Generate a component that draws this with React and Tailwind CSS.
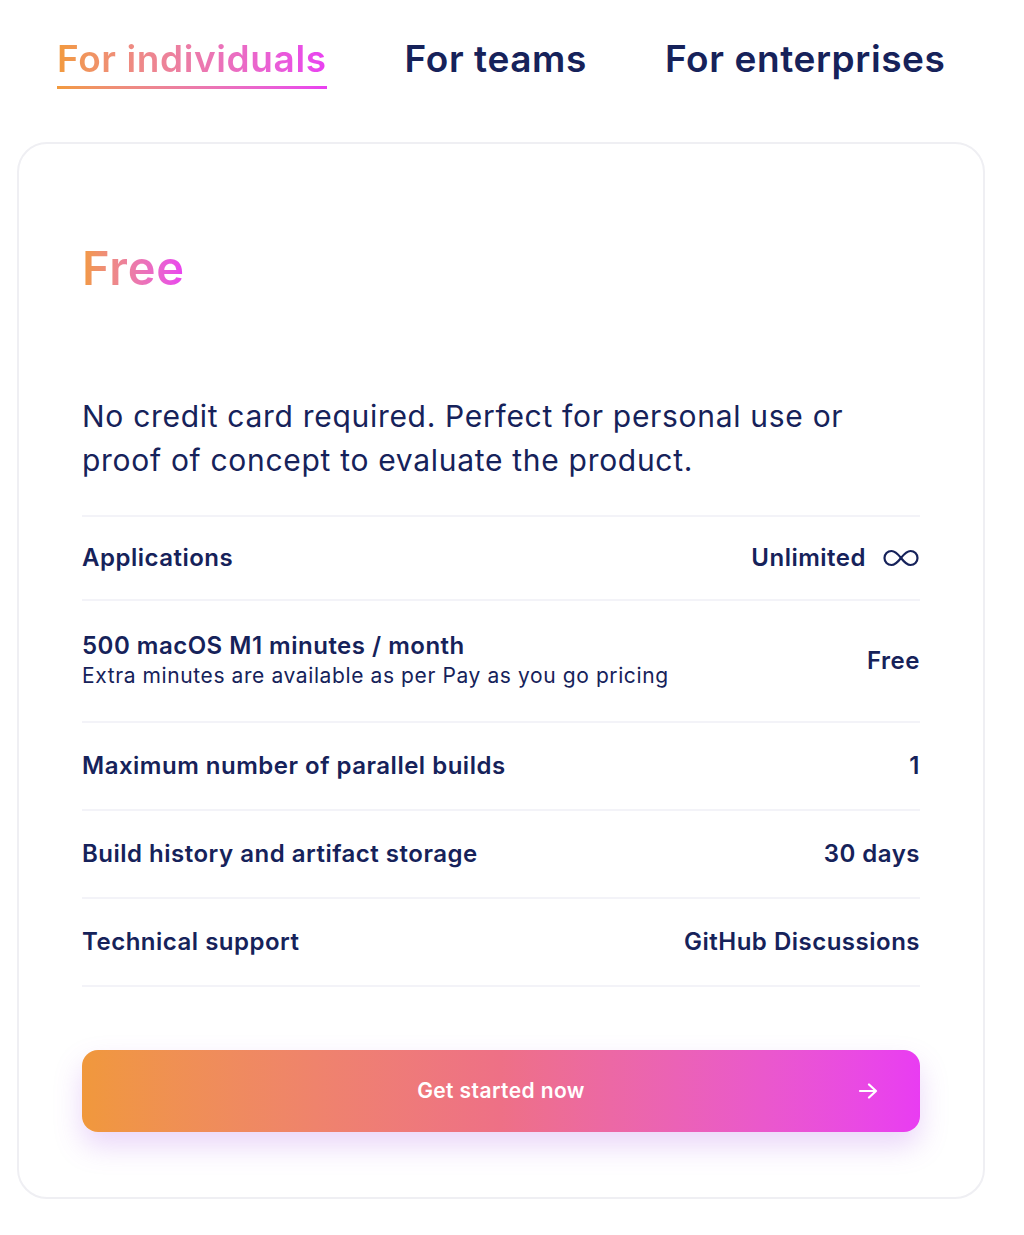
import React, { useState } from 'react';

const tabs = ['For individuals', 'For teams', 'For enterprises'];

const rows = [
  { label: 'Applications', value: 'Unlimited', infinity: true },
  { label: '500 macOS M1 minutes / month', sub: 'Extra minutes are available as per Pay as you go pricing', value: 'Free' },
  { label: 'Maximum number of parallel builds', value: '1' },
  { label: 'Build history and artifact storage', value: '30 days' },
  { label: 'Technical support', value: 'GitHub Discussions' },
];

const gradientText = 'bg-gradient-to-r from-[#f29a3c] to-[#e93ff2] bg-clip-text text-transparent';

const InfinityIcon = () => (
  <svg width="38" height="20" viewBox="0 0 38 20" fill="none" stroke="#16225a" strokeWidth="2.2">
    <path d="M19 10c-3.5-4.5-6-7-9.5-7C5.5 3 2.5 6 2.5 10s3 7 7 7c3.5 0 6-2.5 9.5-7s6-7 9.5-7c4 0 7 3 7 7s-3 7-7 7c-3.5 0-6-2.5-9.5-7z" />
  </svg>
);

const App = () => {
  const [active, setActive] = useState(0);

  return (
    <div className="min-h-screen bg-white pt-[37px] text-[#16225a]" style={{ fontFamily: 'Inter, "Open Sans", sans-serif' }}>
      <div className="flex pl-[57px] gap-[78px]">
        {tabs.map((tab, i) => (
          <button
            key={tab}
            type="button"
            onClick={() => setActive(i)}
            className="flex flex-col items-start"
          >
            <span className={`text-[37px] font-semibold leading-[44px] tracking-[0.6px] ${i === active ? gradientText : 'text-[#16225a]'}`}>
              {tab}
            </span>
            {i === active && <span className="mt-[5px] h-[3px] w-full bg-gradient-to-r from-[#f29a3c] to-[#e93ff2]" />}
          </button>
        ))}
      </div>

      <div className="ml-[17px] mt-[53px] w-[968px] rounded-[30px] border-2 border-[#efeff3] px-[63px] pt-[94px] pb-[65px]">
        <h2 className={`inline-block text-[47px] font-semibold leading-[60px] tracking-[0.8px] ${gradientText}`}>Free</h2>

        <p className="mt-[96px] max-w-[800px] text-[30px] leading-[44px] tracking-[0.7px]">
          No credit card required. Perfect for personal use or proof of concept to evaluate the product.
        </p>

        <div className="mt-[33px] border-t-2 border-[#f3f3f8]">
          {rows.map((row, i) => (
            <div
              key={row.label}
              className={`flex items-center justify-between border-b-2 border-[#f3f3f8] ${row.sub ? 'py-[31px]' : i === 0 ? 'py-[27px]' : 'py-[29px]'}`}
            >
              <div>
                <div className="text-[24px] font-semibold leading-[28px] tracking-[0.5px]">{row.label}</div>
                {row.sub && <div className="mt-[2px] text-[21px] leading-[28px] tracking-[0.6px]">{row.sub}</div>}
              </div>
              <div className="flex items-center gap-[16px] text-[24px] font-semibold leading-[28px] tracking-[0.5px]">
                {row.value}
                {row.infinity && <InfinityIcon />}
              </div>
            </div>
          ))}
        </div>

        <button
          type="button"
          className="relative mt-[63px] flex h-[82px] w-full items-center justify-center rounded-[16px] bg-gradient-to-r from-[#f0983c] via-[#ee7086] to-[#e93cf2] text-[21px] font-semibold tracking-[0.4px] text-white shadow-[0_14px_28px_rgba(170,90,230,0.25)]"
        >
          Get started now
          <svg className="absolute right-[42px]" width="20" height="16" viewBox="0 0 20 16" fill="none" stroke="white" strokeWidth="2.2" strokeLinecap="round" strokeLinejoin="round">
            <path d="M2 8h16M11 1.5 18 8l-7 6.5" />
          </svg>
        </button>
      </div>
    </div>
  );
};

export default App;
